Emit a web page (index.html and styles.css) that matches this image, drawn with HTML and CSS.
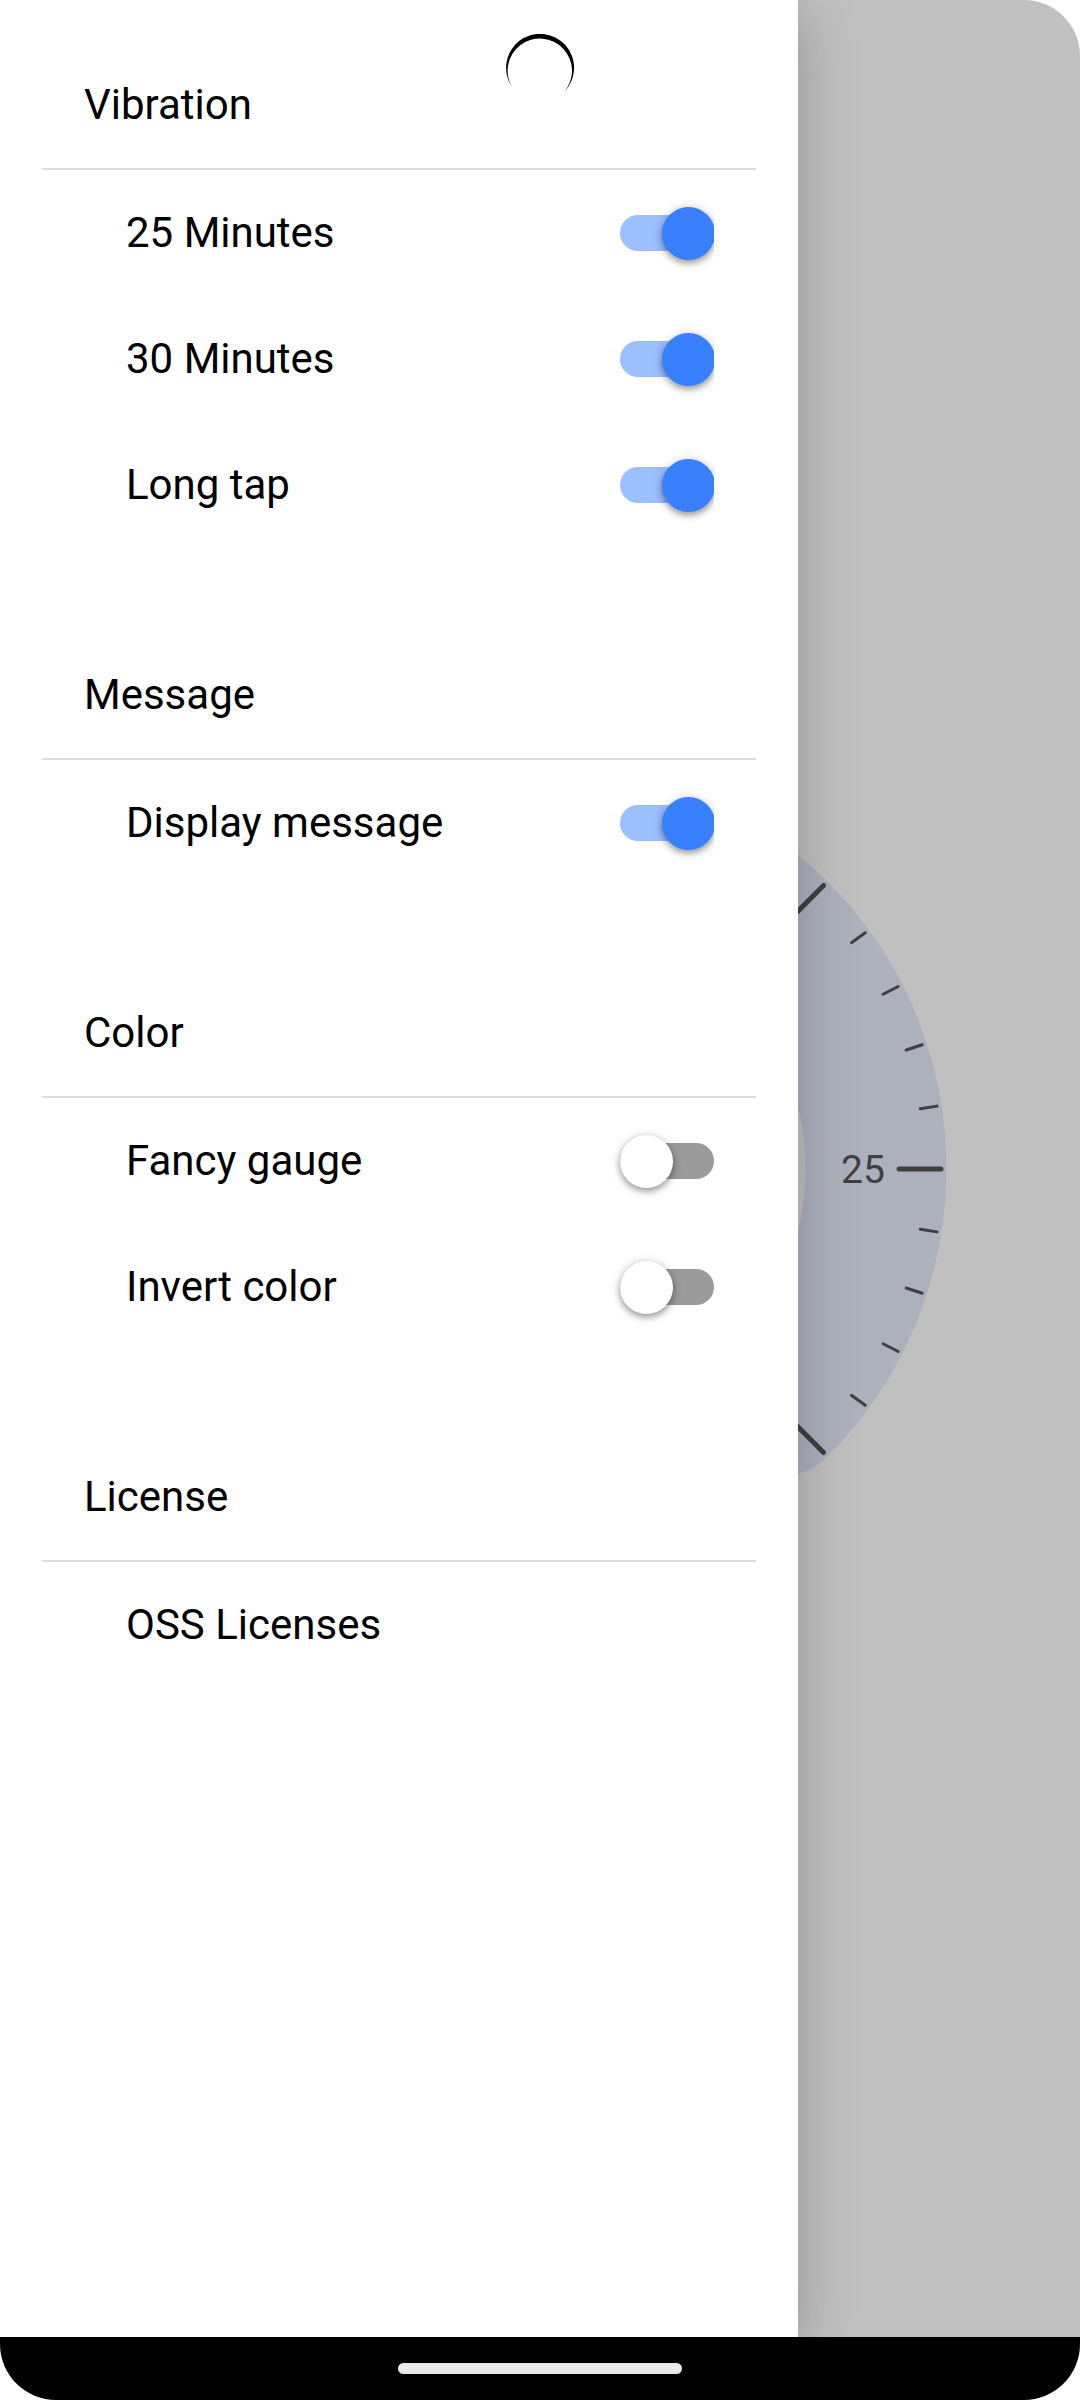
FILE: index.html
```html
<!DOCTYPE html>
<html lang="en">
<head>
<meta charset="utf-8">
<meta name="viewport" content="width=device-width, initial-scale=1">
<title>Settings</title>
<link rel="stylesheet" href="styles.css">
</head>
<body>
<div class="screen">
  <div class="content">
    <main class="drawer">
      <section class="group">
        <h2 class="group-title">Vibration</h2>
        <label class="row">25 Minutes<input class="switch" type="checkbox" role="switch" checked></label>
        <label class="row">30 Minutes<input class="switch" type="checkbox" role="switch" checked></label>
        <label class="row">Long tap<input class="switch" type="checkbox" role="switch" checked></label>
      </section>
      <section class="group">
        <h2 class="group-title">Message</h2>
        <label class="row">Display message<input class="switch" type="checkbox" role="switch" checked></label>
      </section>
      <section class="group">
        <h2 class="group-title">Color</h2>
        <label class="row">Fancy gauge<input class="switch" type="checkbox" role="switch"></label>
        <label class="row">Invert color<input class="switch" type="checkbox" role="switch"></label>
      </section>
      <section class="group">
        <h2 class="group-title">License</h2>
        <a class="row" href="#licenses">OSS Licenses</a>
      </section>
    </main>
    <svg class="gauge" viewBox="-410 -410 820 820" aria-hidden="true">
      <path class="gauge-band" d="M-237.6 237.6A336 336 0 1 1 237.6 237.6"/>
      <g class="gauge-major">
        <path d="M359 0H401"/>
        <path d="M359 0H401" transform="rotate(45)"/>
        <path d="M359 0H401" transform="rotate(-45)"/>
      </g>
      <g class="gauge-minor">
        <path d="M385 0H402" transform="rotate(-36)"/>
        <path d="M385 0H402" transform="rotate(-27)"/>
        <path d="M385 0H402" transform="rotate(-18)"/>
        <path d="M385 0H402" transform="rotate(-9)"/>
        <path d="M385 0H402" transform="rotate(9)"/>
        <path d="M385 0H402" transform="rotate(18)"/>
        <path d="M385 0H402" transform="rotate(27)"/>
        <path d="M385 0H402" transform="rotate(36)"/>
      </g>
      <text class="gauge-label" x="323" y="14" text-anchor="middle">25</text>
    </svg>
    <svg class="camera-ring" viewBox="0 0 68 68" aria-hidden="true">
      <path d="M6 53A34 34 0 1 1 58.500 57.500A32.200 32.200 0 1 0 6 53Z"/>
    </svg>
  </div>
  <nav class="nav-bar"><button class="home-pill" type="button" aria-label="Home"></button></nav>
</div>
</body>
</html>
```
FILE: styles.css
```css
* {
  box-sizing: border-box;
}

body {
  margin: 0;
  background: #fff;
  color: #000;
  font-family: Roboto, "Noto Sans", sans-serif;
  font-size: 42px;
  line-height: 48px;
}

.screen {
  display: flex;
  flex-direction: column;
  min-height: 100vh;
  overflow: hidden;
  border-radius: 0 56px 56px 56px;
}

.content {
  position: relative;
  display: flex;
  flex: 1;
  overflow: hidden;
  background: #c0c0c0;
}

.drawer {
  position: relative;
  z-index: 1;
  display: flex;
  flex-direction: column;
  gap: 84px;
  width: 73.9%;
  padding: 42px;
  background: #fff;
  box-shadow: 0 10px 56px rgba(0, 0, 0, 0.24);
}

.group {
  display: flex;
  flex-direction: column;
}

.group-title {
  margin: 0;
  padding: 39px 42px;
  border-bottom: 2px solid #dcdcdc;
  font-size: 42px;
  font-weight: 400;
}

.row {
  display: flex;
  align-items: center;
  justify-content: space-between;
  height: 126px;
  padding: 0 42px 0 84px;
  color: inherit;
  text-decoration: none;
}

.switch {
  display: grid;
  align-items: center;
  width: 94px;
  height: 84px;
  margin: 0;
  appearance: none;
}

.switch::before,
.switch::after {
  content: "";
  grid-area: 1 / 1;
}

.switch::before {
  height: 36px;
  border-radius: 18px;
  background: #9b9b9b;
}

.switch::after {
  width: 53px;
  height: 53px;
  border-radius: 50%;
  background: #fff;
  box-shadow: 0 3px 7px rgba(0, 0, 0, 0.4), 0 0 14px rgba(0, 0, 0, 0.08);
}

.switch:checked {
  overflow: hidden;
}

.switch:checked::before {
  background: #9bbfff;
}

.switch:checked::after {
  margin-left: 42px;
  background: #3880ff;
}

.gauge {
  position: absolute;
  top: 50%;
  left: 50%;
  width: 820px;
  height: 820px;
  transform: translate(-50%, -50%);
}

.gauge-band {
  fill: none;
  stroke: #adb1bc;
  stroke-width: 141px;
  stroke-linecap: round;
}

.gauge-major,
.gauge-minor {
  stroke: #404040;
  stroke-linecap: round;
}

.gauge-major {
  stroke-width: 5px;
}

.gauge-minor {
  stroke-width: 3px;
}

.gauge-label {
  fill: #404040;
  font-size: 39px;
}

.camera-ring {
  position: absolute;
  z-index: 2;
  top: 34px;
  left: 50%;
  width: 68px;
  height: 68px;
  transform: translateX(-50%);
}

.nav-bar {
  display: flex;
  align-items: center;
  justify-content: center;
  height: 63px;
  background: #000;
}

.home-pill {
  width: 284px;
  height: 11px;
  padding: 0;
  border: 0;
  border-radius: 6px;
  background: #eaeaea;
}
```
